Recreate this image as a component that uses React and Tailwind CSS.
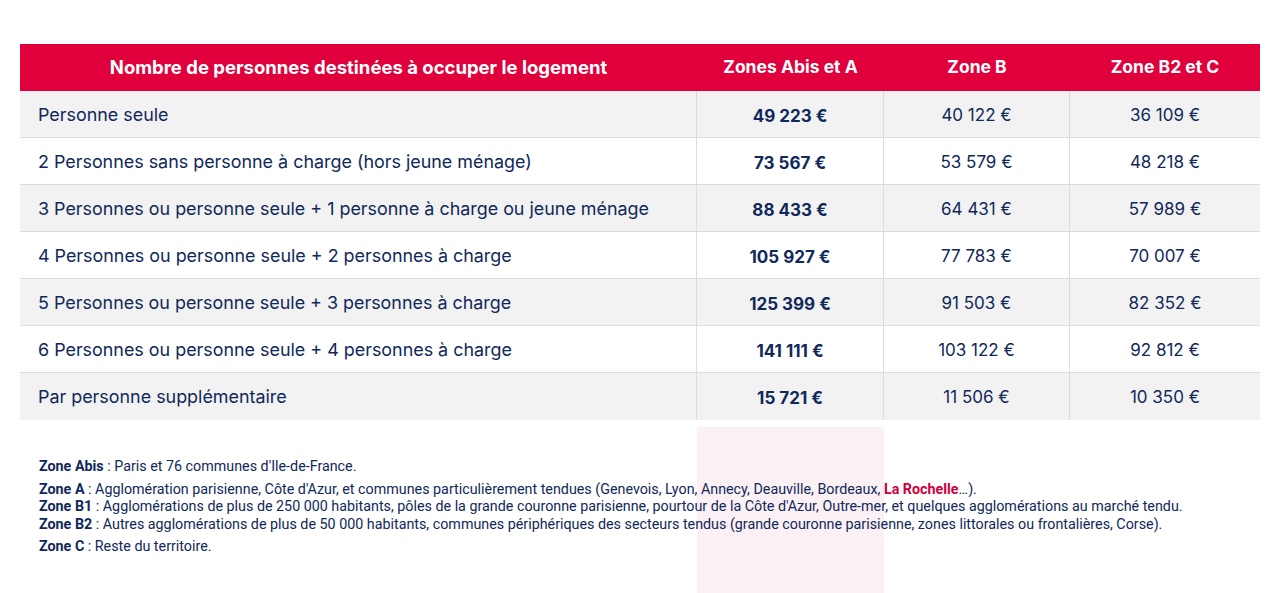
import React from 'react';

const rows = [
  ['Personne seule', '49 223 €', '40 122 €', '36 109 €'],
  ['2 Personnes sans personne à charge (hors jeune ménage)', '73 567 €', '53 579 €', '48 218 €'],
  ['3 Personnes ou personne seule + 1 personne à charge ou jeune ménage', '88 433 €', '64 431 €', '57 989 €'],
  ['4 Personnes ou personne seule + 2 personnes à charge', '105 927 €', '77 783 €', '70 007 €'],
  ['5 Personnes ou personne seule + 3 personnes à charge', '125 399 €', '91 503 €', '82 352 €'],
  ['6 Personnes ou personne seule + 4 personnes à charge', '141 111 €', '103 122 €', '92 812 €'],
  ['Par personne supplémentaire', '15 721 €', '11 506 €', '10 350 €'],
];

const cols = 'grid grid-cols-[677px_187px_186px_190px]';

export default function App() {
  return (
    <div className="w-[1280px] h-[593px] bg-white overflow-hidden font-['Inter',sans-serif]">
      <div className="pt-[44px] px-[20px]">
        {/* header */}
        <div className={`${cols} h-[47px] bg-[#e0003b] text-white font-bold text-[17.5px]`}>
          <div className="flex items-center justify-center text-[18.5px]">Nombre de personnes destinées à occuper le logement</div>
          <div className="flex items-center justify-center">Zones Abis et A</div>
          <div className="flex items-center justify-center">Zone B</div>
          <div className="flex items-center justify-center">Zone B2 et C</div>
        </div>

        {rows.map((r, i) => (
          <div
            key={i}
            className={`${cols} h-[47px] text-[#10285a] text-[17.9px] ${i % 2 === 0 ? 'bg-[#f2f2f2]' : 'bg-white'} ${i < rows.length - 1 ? 'border-b border-[#dcdcdc]' : ''}`}
          >
            <div className="flex items-center pl-[18px] pt-[2px] border-r border-[#dcdcdc]">{r[0]}</div>
            <div className="flex items-center justify-center pt-[5px] font-bold text-[17px] border-r border-[#dcdcdc]">{r[1]}</div>
            <div className="flex items-center justify-center pt-[3px] text-[17px] border-r border-[#dcdcdc]">{r[2]}</div>
            <div className="flex items-center justify-center pt-[3px] text-[17px]">{r[3]}</div>
          </div>
        ))}
      </div>

      {/* notes */}
      <div className="relative mt-[7px] h-[172px]">
        <div className="absolute left-[697px] top-0 w-[187px] h-full bg-[#fbf0f3]" />
        <div className="relative pl-[39px] pt-[31px] text-[14.3px] text-[#10285a] font-['Roboto',sans-serif] leading-[17.5px]">
          <p><b>Zone Abis</b> : Paris et 76 communes d'Ile-de-France.</p>
          <p className="mt-[5px]"><b>Zone A</b> : Agglomération parisienne, Côte d'Azur, et communes particulièrement tendues (Genevois, Lyon, Annecy, Deauville, Bordeaux, <b className="text-[#d1003a]">La Rochelle</b>…).</p>
          <p><b>Zone B1</b> : Agglomérations de plus de 250 000 habitants, pôles de la grande couronne parisienne, pourtour de la Côte d'Azur, Outre-mer, et quelques agglomérations au marché tendu.</p>
          <p><b>Zone B2</b> : Autres agglomérations de plus de 50 000 habitants, communes périphériques des secteurs tendus (grande couronne parisienne, zones littorales ou frontalières, Corse).</p>
          <p className="mt-[5px]"><b>Zone C</b> : Reste du territoire.</p>
        </div>
      </div>
    </div>
  );
}
